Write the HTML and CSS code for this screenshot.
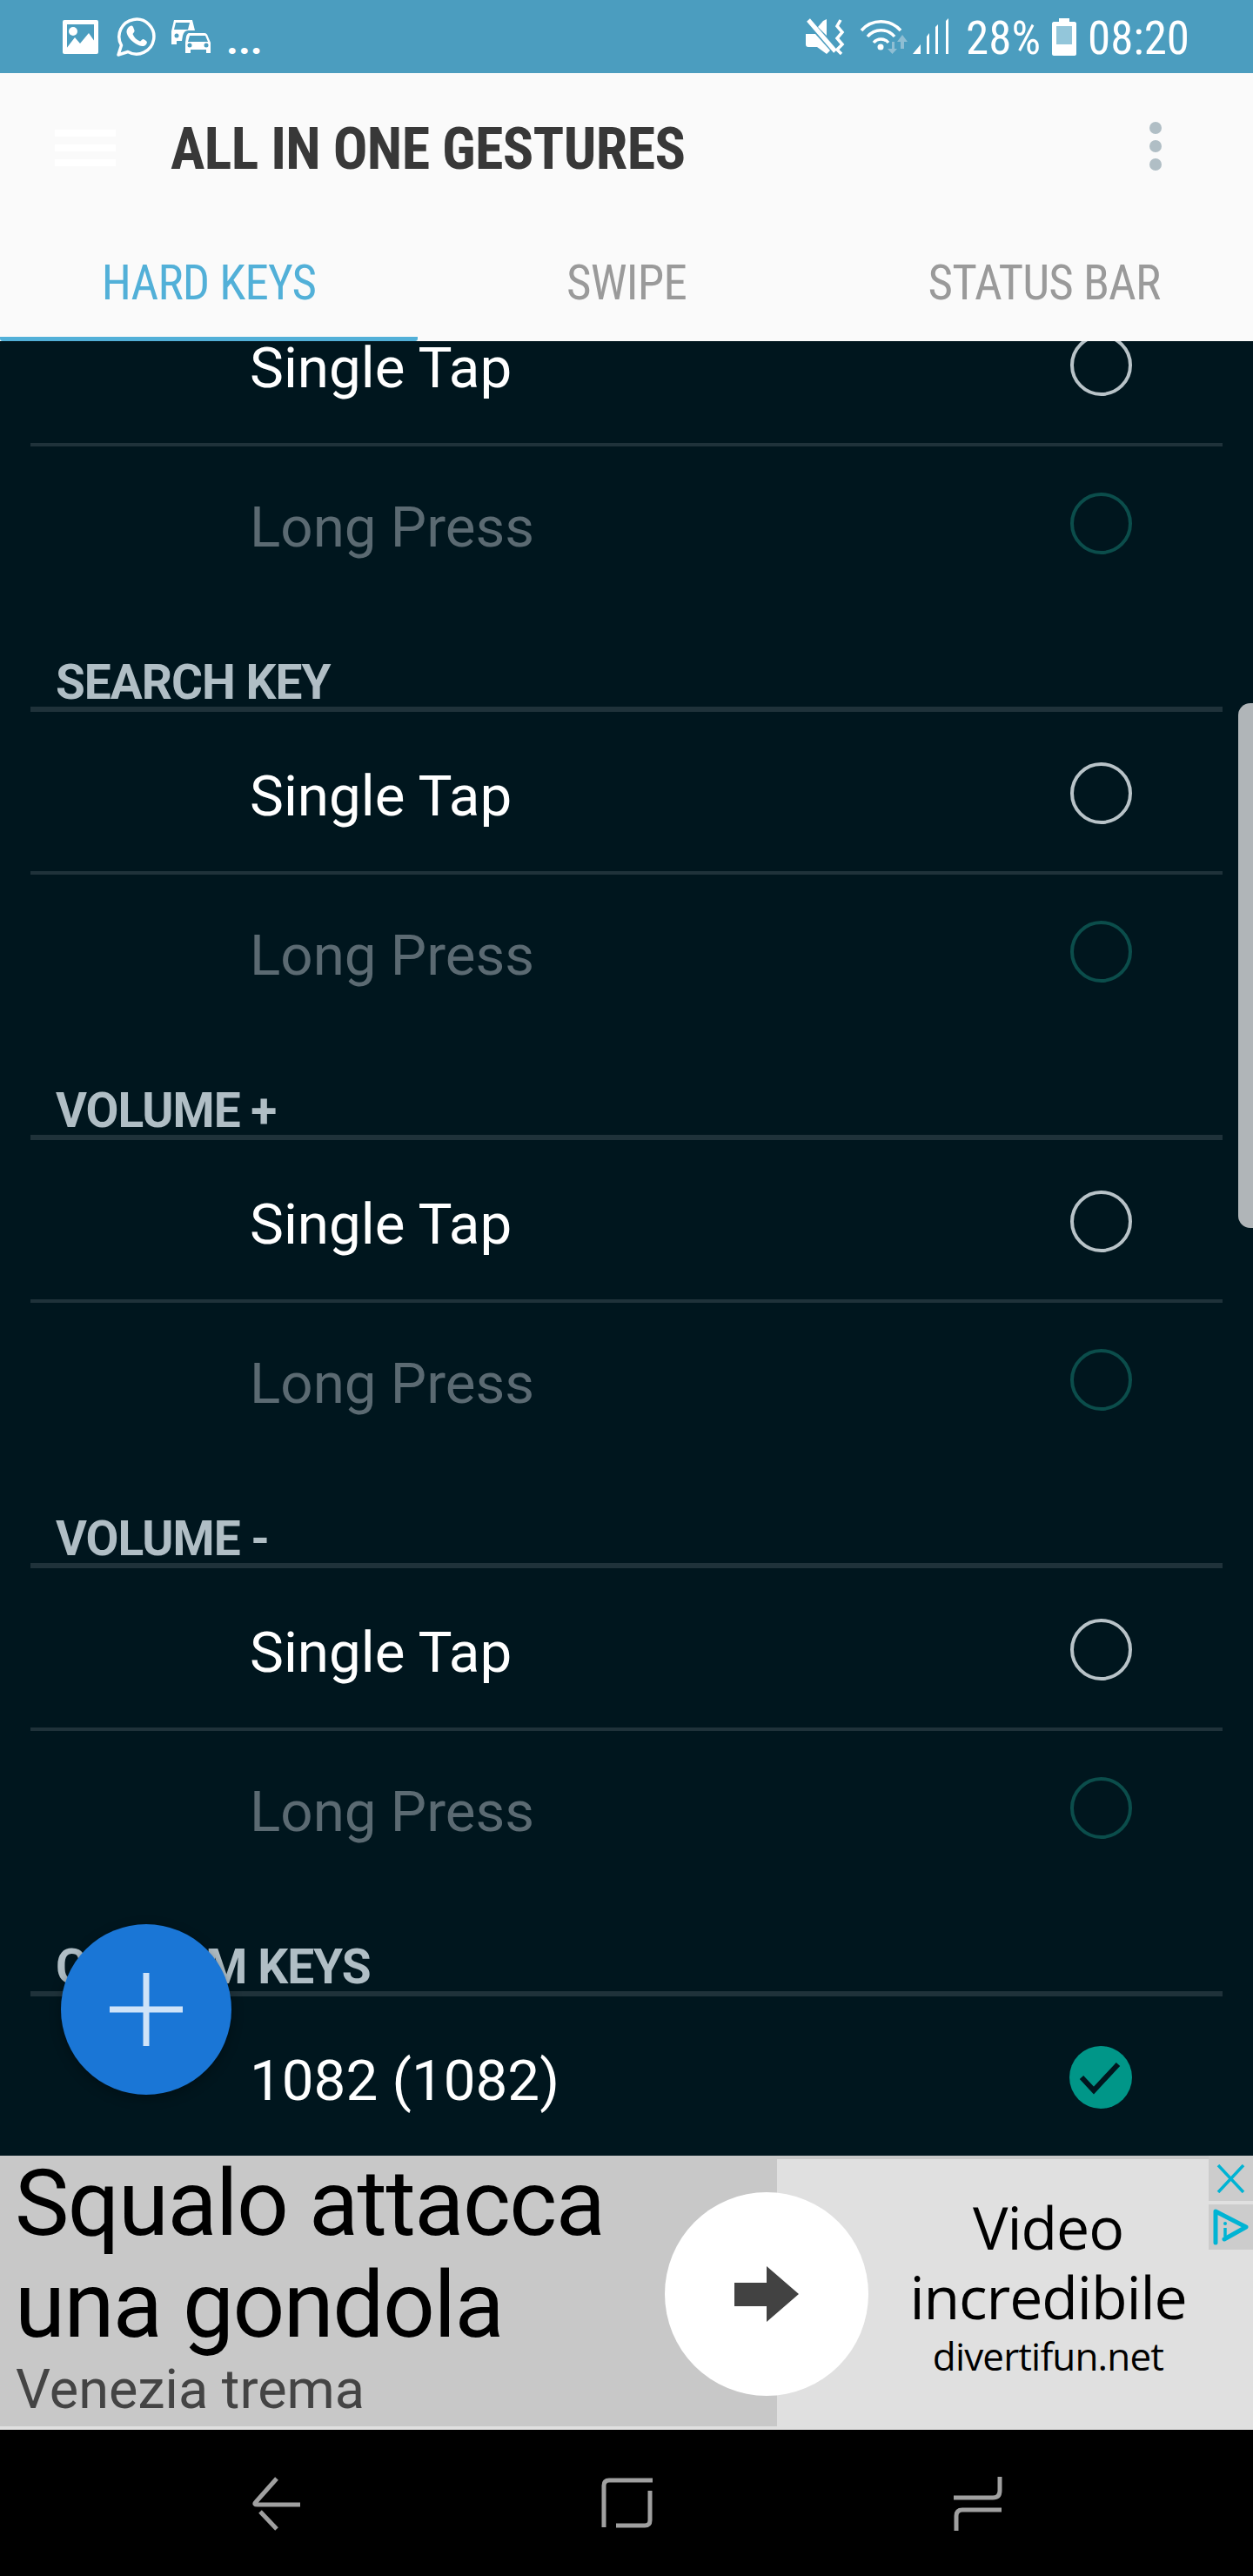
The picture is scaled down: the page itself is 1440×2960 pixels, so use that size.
FILE: index.html
```html
<!DOCTYPE html>
<html lang="it">
<head>
    <meta charset="UTF-8">
    <title>All in One Gestures</title>
    <link rel="stylesheet" href="styles.css">
</head>
<body>
    <div class="statusbar">
        <div class="status-left">
            <svg class="ic-picture" width="41" height="39" viewBox="0 0 41 39">
                <rect width="41" height="39" rx="2" fill="#fff"/>
                <rect x="5" y="5" width="31" height="27" fill="#4b9dbf"/>
                <circle cx="12" cy="13" r="5" fill="#fff"/>
                <path d="M4 33 L14 20 L20 27 L30 15 L37 25 V34 H4 Z" fill="#fff"/>
            </svg>
            <svg class="ic-whatsapp" width="46" height="46" viewBox="0 0 46 46">
                <path d="M3 44 L6.5 33 A20 20 0 1 1 14 40.5 Z" fill="none" stroke="#fff" stroke-width="3.5" stroke-linejoin="round"/>
                <path d="M15 12 C17 10 19 10 20 12 L21.5 16 C22 17 20 19.5 19.5 20 C21 24 24 27 28 28.5 C29 28 31 25.5 32 26 L35 28 C36.5 29 36 31 34.5 32.5 C32 35 28 34.5 22.5 31 C17 27.5 13 22 12.5 18 C12.3 15.500 13.500 13.500 15 12 Z" fill="#fff"/>
            </svg>
            <svg class="ic-cars" width="46" height="40" viewBox="0 0 46 40">
                <path d="M3 1 H24 L27 13 H19 C16 13 14 15 13 19 L12 25 H6 V29 H0 V14 Z M5 4 L3 12 H19 L21 4 Z" fill="#fff" fill-rule="evenodd"/>
                <path d="M20 16 H38 C40 16 41 17 42 20 L45 27 V39 H40 V35 H22 V39 H16 V27 L17 20 C18 17 19 16 20 16 Z M21 19 L19 26 H42 L39 19 Z" fill="#fff" fill-rule="evenodd"/>
                <circle cx="21" cy="30" r="2.500" fill="#4b9dbf"/>
                <circle cx="40" cy="30" r="2.500" fill="#4b9dbf"/>
                <circle cx="6" cy="19" r="2.500" fill="#4b9dbf"/>
            </svg>
            <span class="dots">...</span>
        </div>
        <div class="status-right">
            <svg class="ic-mute" width="46" height="42" viewBox="0 0 46 42">
                <path d="M0 18 L11 18 L28 37 L24 41 L13 33 H3 C1 33 0 32 0 30 Z" fill="#fff"/>
                <path d="M20 3 L24 1 V20 L14 10 Z" fill="#fff"/>
                <path d="M3 2 L34 38" stroke="#fff" stroke-width="5"/>
                <path d="M40 2 L36 9 L42 16 L36 23 L42 30 L36 36 L41 41" fill="none" stroke="#fff" stroke-width="3.500"/>
            </svg>
            <svg class="ic-wifi" width="56" height="44" viewBox="0 0 56 44">
                <path d="M2 15 A30 30 0 0 1 47 15" fill="none" stroke="#fff" stroke-width="3.500"/>
                <path d="M9 22 A20 20 0 0 1 40 22" fill="none" stroke="#fff" stroke-width="3.500"/>
                <path d="M16 29 A11 11 0 0 1 33 29" fill="none" stroke="#fff" stroke-width="3.500"/>
                <circle cx="24" cy="34" r="3.500" fill="#fff"/>
                <path d="M37 28 V36 H32 L37.500 42 L43 36 H40 V28 Z" fill="#8fbed3"/>
                <path d="M49 20 L43 28 H47 V36 H51 V28 H55 Z" fill="#8fbed3"/>
            </svg>
            <svg class="ic-signal" width="42" height="42" viewBox="0 0 42 42">
                <path d="M0 41 L9 30 V41 Z" fill="#fff"/>
                <path d="M16 21 L19 17 V41 H16 Z" fill="#fff"/>
                <path d="M26 10 L29 7 V41 H26 Z" fill="#fff"/>
                <path d="M38 3 L41 0 V41 H38 Z" fill="#fff"/>
            </svg>
            <span class="status-text">28%</span>
            <svg class="ic-battery" width="28" height="43" viewBox="0 0 28 43">
                <path d="M8 0 H20 V4 H26 C27 4 28 5 28 6 V41 C28 42 27 43 26 43 H2 C1 43 0 42 0 41 V6 C0 5 1 4 2 4 H8 Z" fill="#fff"/>
                <rect x="5" y="9" width="18" height="21" fill="#93c6da"/>
            </svg>
            <span class="status-text time">08:20</span>
        </div>
    </div>

    <div class="appbar">
        <div class="toolbar">
            <div class="hamburger"><span></span><span></span><span></span></div>
            <h1 class="title">ALL IN ONE GESTURES</h1>
            <div class="kebab"><span></span><span></span><span></span></div>
        </div>
        <div class="tabs">
            <div class="tab active"><span>HARD KEYS</span></div>
            <div class="tab"><span>SWIPE</span></div>
            <div class="tab"><span>STATUS BAR</span></div>
        </div>
    </div>

    <div class="list">
        <div class="scroller">
            <div class="section">
                <div class="row first"><span class="label">Single Tap</span><span class="radio"></span></div>
                <div class="row off"><span class="label">Long Press</span><span class="radio"></span></div>
            </div>
            <div class="section">
                <div class="section-head"><span>SEARCH KEY</span></div>
                <div class="row first"><span class="label">Single Tap</span><span class="radio"></span></div>
                <div class="row off"><span class="label">Long Press</span><span class="radio"></span></div>
            </div>
            <div class="section">
                <div class="section-head"><span>VOLUME +</span></div>
                <div class="row first"><span class="label">Single Tap</span><span class="radio"></span></div>
                <div class="row off"><span class="label">Long Press</span><span class="radio"></span></div>
            </div>
            <div class="section">
                <div class="section-head"><span>VOLUME -</span></div>
                <div class="row first"><span class="label">Single Tap</span><span class="radio"></span></div>
                <div class="row off"><span class="label">Long Press</span><span class="radio"></span></div>
            </div>
            <div class="section">
                <div class="section-head"><span>CUSTOM KEYS</span></div>
                <div class="row">
                    <span class="label">1082 (1082)</span>
                    <svg class="check" width="72" height="72" viewBox="0 0 72 72">
                        <circle cx="36" cy="36" r="36" fill="#009688"/>
                        <path d="M14 36 L28 51 L56 21" fill="none" stroke="#00161e" stroke-width="6"/>
                    </svg>
                </div>
            </div>
        </div>
        <div class="scrollbar"></div>
        <div class="fab">
            <svg width="84" height="84" viewBox="0 0 84 84">
                <path d="M38.500 0 H45.500 V38.500 H84 V45.500 H45.500 V84 H38.500 V45.500 H0 V38.500 H38.500 Z" fill="#cfe3f8"/>
            </svg>
        </div>
    </div>

    <div class="ad">
        <div class="ad-left">
            <div class="ad-title">Squalo attacca<br>una gondola</div>
            <div class="ad-sub">Venezia trema</div>
        </div>
        <div class="ad-right">
            <div class="ad-big">Video<br>incredibile</div>
            <div class="ad-url">divertifun.net</div>
        </div>
        <div class="ad-go">
            <svg width="74" height="64" viewBox="0 0 74 64">
                <path d="M0 19 H37 V0 L74 32 L37 64 V46 H0 Z" fill="#424242"/>
            </svg>
        </div>
        <div class="ad-btn ad-close">
            <svg width="33" height="33" viewBox="0 0 33 33">
                <path d="M2 1 L31 32 M31 1 L2 32" stroke="#00b4d4" stroke-width="3.500"/>
            </svg>
        </div>
        <div class="ad-btn ad-info">
            <svg width="42" height="42" viewBox="0 0 42 42">
                <path d="M3 39 V3 L38 21 L13 35" fill="none" stroke="#00b4d4" stroke-width="5" stroke-linejoin="round" stroke-linecap="round"/>
                <circle cx="14" cy="17" r="2" fill="#00b4d4"/>
                <path d="M14 22 V32" stroke="#00b4d4" stroke-width="3.500"/>
            </svg>
        </div>
    </div>

    <div class="navbar">
        <svg class="nav-back" width="56" height="62" viewBox="0 0 56 62">
            <path d="M28 2 L4 29 Q1 32 6 32 H55" fill="none" stroke="#a0a0a0" stroke-width="5"/>
            <path d="M9 40 L28 60" fill="none" stroke="#a0a0a0" stroke-width="5"/>
        </svg>
        <svg class="nav-home" width="60" height="60" viewBox="0 0 60 60">
            <path d="M3 58 V10 Q3 4 9 4 H59" fill="none" stroke="#a0a0a0" stroke-width="5"/>
            <path d="M56 16 V50 Q56 56 50 56 H17" fill="none" stroke="#a0a0a0" stroke-width="5"/>
        </svg>
        <svg class="nav-recent" width="56" height="62" viewBox="0 0 56 62">
            <path d="M53 0 V16 Q53 24 45 24 H0" fill="none" stroke="#a0a0a0" stroke-width="5"/>
            <path d="M55 38 H10 Q3 38 3 45 V62" fill="none" stroke="#a0a0a0" stroke-width="5"/>
        </svg>
    </div>
</body>
</html>
```

FILE: styles.css
```css
html, body {
    margin: 0;
    padding: 0;
}
body {
    width: 1440px;
    height: 2960px;
    display: flex;
    flex-direction: column;
    overflow: hidden;
    font-family: Roboto, "Liberation Sans", sans-serif;
    background-color: #00161e;
}

/* status bar */
.statusbar {
    height: 84px;
    flex: none;
    display: flex;
    justify-content: space-between;
    background-color: #4b9dbf;
    color: white;
}
.status-left, .status-right {
    display: flex;
    align-items: center;
}
.status-left {
    padding-left: 72px;
}
.status-right {
    padding-right: 73px;
}
.ic-whatsapp {
    margin-left: 20px;
}
.ic-cars {
    margin-left: 18px;
}
.dots {
    margin-left: 17px;
    font-size: 48px;
    padding-top: 6px;
    font-weight: 700;
}
.ic-wifi {
    margin-left: 16px;
}
.ic-signal {
    margin-left: 5px;
}
.status-text {
    font-size: 53px;
    font-stretch: 75%;
    padding-top: 4px;
    margin-left: 19px;
}
.ic-battery {
    margin-left: 13px;
}
.time {
    margin-left: 13px;
}

/* app bar */
.appbar {
    flex: none;
    background-color: #fafafa;
}
.toolbar {
    height: 175px;
    display: flex;
    align-items: center;
    position: relative;
    padding-left: 63px;
}
.hamburger {
    width: 70px;
    display: flex;
    flex-direction: column;
    gap: 9px;
    margin-top: -3px;
}
.hamburger span {
    height: 8px;
    background-color: white;
}
.title {
    margin: 0 0 0 63px;
    font-size: 66px;
    font-weight: 700;
    font-stretch: 75%;
    letter-spacing: -0.65px;
    color: #383838;
    flex: 1;
}
.kebab {
    display: flex;
    flex-direction: column;
    gap: 7px;
    margin-right: 105px;
    margin-top: -7px;
}
.kebab span {
    width: 14px;
    height: 14px;
    border-radius: 50%;
    background-color: #b0bec5;
}
.tabs {
    display: flex;
    height: 133px;
}
.tab {
    flex: 1;
    box-sizing: border-box;
    display: flex;
    align-items: center;
    justify-content: center;
    padding-top: 3px;
    border-bottom: 5px solid transparent;
    border-radius: 0 0 3px 3px;
    font-size: 55px;
    font-stretch: 75%;
    letter-spacing: -0.8px;
    color: #9a9a9a;
}
.tab.active {
    color: #52b0d8;
    border-bottom-color: #52b0d8;
}

/* list */
.list {
    flex: 1;
    position: relative;
    overflow: hidden;
    background-color: #00161e;
}
.scroller {
    margin-top: -66px;
    padding: 0 35px;
}
.section-head {
    box-sizing: content-box;
    height: 56px;
    padding: 67px 0 0 29px;
    border-bottom: 6px solid #1f323a;
    font-size: 55px;
    line-height: 56px;
    font-weight: 700;
    letter-spacing: -1px;
    color: #b0bec5;
}
.row {
    display: flex;
    align-items: center;
    justify-content: space-between;
    height: 183px;
    padding: 0 104px 0 252px;
    color: white;
    font-size: 65.5px;
}
.row.first {
    border-bottom: 4px solid #1f323a;
}
.row.off {
    height: 176px;
    color: #5b6a72;
}
.label {
    padding-top: 10px;
}
.row.off .label {
    padding-top: 8px;
}
.radio {
    box-sizing: border-box;
    width: 71px;
    height: 71px;
    margin-top: 3px;
    border: 4px solid #b8c3c8;
    border-radius: 50%;
}
.check {
    margin-top: 3px;
}
.row.off .radio {
    margin-top: 0;
    border-color: #0b4d4b;
}
.scrollbar {
    position: absolute;
    right: 0;
    top: 416px;
    width: 17px;
    height: 603px;
    background-color: #b0b5b8;
    border-radius: 14px 0 0 14px;
}
.fab {
    position: absolute;
    left: 70px;
    bottom: 70px;
    width: 196px;
    height: 196px;
    border-radius: 50%;
    background-color: #1a76d6;
    box-shadow: 0 4px 14px rgba(0, 0, 0, 0.3);
    display: flex;
    align-items: center;
    justify-content: center;
}

/* ad */
.ad {
    flex: none;
    height: 315px;
    position: relative;
    display: flex;
    background-color: #c8c8c8;
}
.ad-left {
    width: 893px;
    box-sizing: border-box;
    padding-left: 17px;
    border-bottom: 4px solid #e0e0e0;
}
.ad-title {
    margin-top: -3px;
    font-size: 105px;
    letter-spacing: -1.5px;
    line-height: 117px;
    color: black;
}
.ad-sub {
    margin: 3px 0 0 1px;
    font-size: 63px;
    line-height: 70px;
    color: #444444;
}
.ad-right {
    flex: 1;
    margin-top: 4px;
    padding-left: 76px;
    box-sizing: border-box;
    background-color: #e0e0e0;
    text-align: center;
    font-family: "Open Sans", sans-serif;
    color: black;
}
.ad-big {
    margin-top: 38px;
    font-size: 68px;
    letter-spacing: -1.1px;
    line-height: 80px;
}
.ad-url {
    margin-top: -2px;
    font-size: 44px;
    letter-spacing: -0.85px;
    line-height: 60px;
}
.ad-go {
    position: absolute;
    left: 764px;
    top: 42px;
    width: 234px;
    height: 234px;
    border-radius: 50%;
    background-color: white;
    display: flex;
    align-items: center;
    justify-content: center;
}
.ad-btn {
    position: absolute;
    right: 0;
    width: 51px;
    height: 52px;
    background-color: #cccccc;
    display: flex;
    align-items: center;
    justify-content: center;
}
.ad-close {
    top: 0;
}
.ad-info {
    top: 56px;
}

/* nav bar */
.navbar {
    flex: none;
    height: 168px;
    position: relative;
    background-color: black;
}
.navbar svg {
    position: absolute;
    top: 54px;
}
.nav-back {
    left: 290px;
}
.nav-home {
    left: 691px;
}
.nav-recent {
    left: 1096px;
}
```
